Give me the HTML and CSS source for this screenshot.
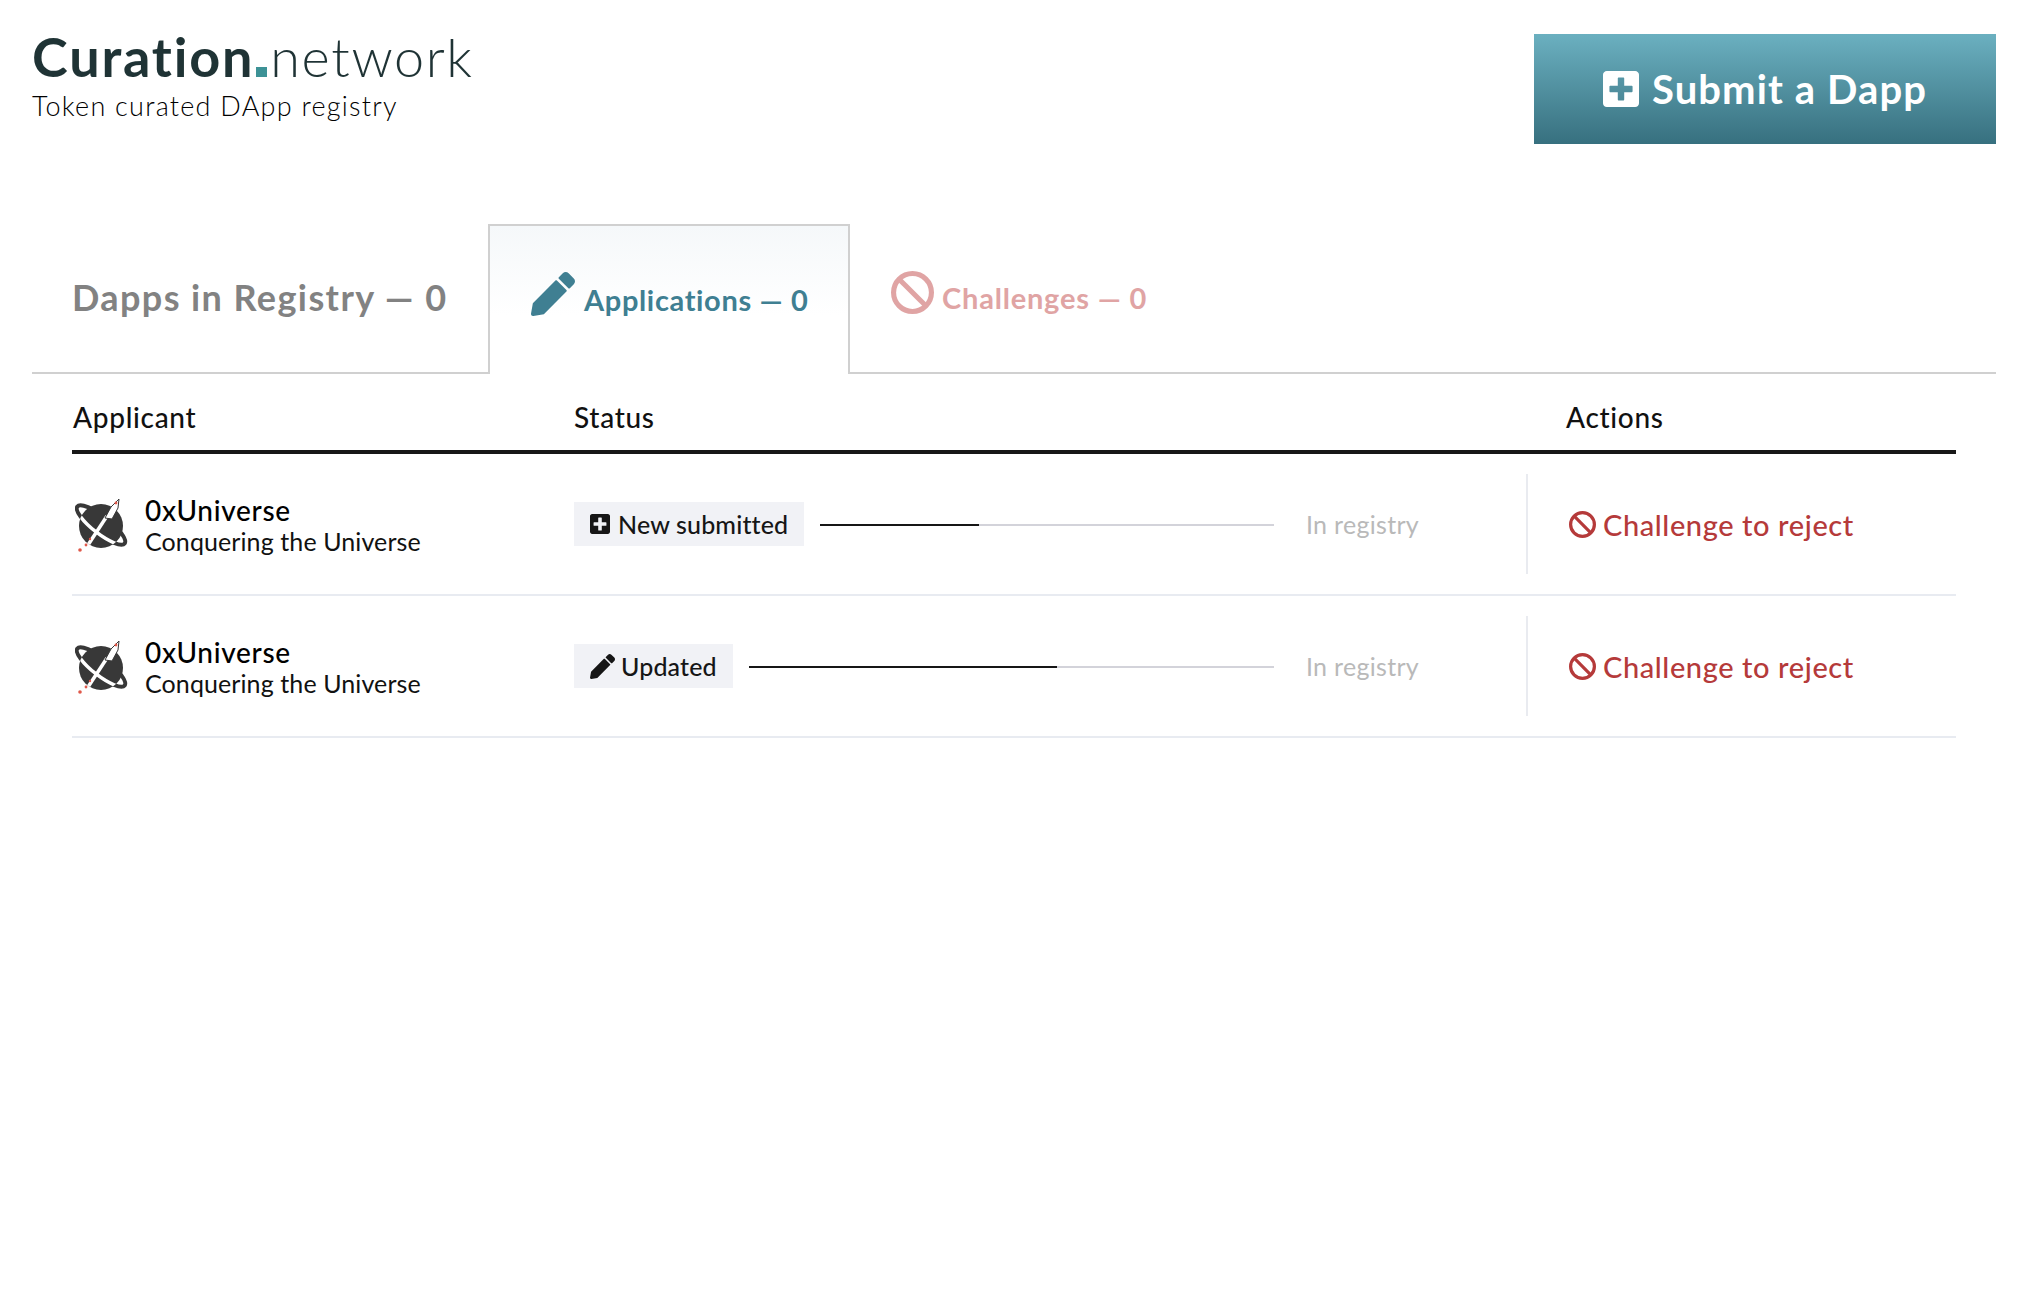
FILE: index.html
```html
<!DOCTYPE html>
<html lang="en">
<head>
<meta charset="utf-8">
<title>Curation.network</title>
<link rel="stylesheet" href="styles.css">
</head>
<body>
<svg class="defs" aria-hidden="true">
  <symbol id="plus" viewBox="0 32 448 448"><path d="M400 32H48C21.5 32 0 53.5 0 80v352c0 26.500 21.500 48 48 48h352c26.500 0 48-21.500 48-48V80c0-26.500-21.500-48-48-48zm-32 252c0 6.600-5.400 12-12 12h-92v92c0 6.600-5.400 12-12 12h-56c-6.600 0-12-5.400-12-12v-92H92c-6.600 0-12-5.400-12-12v-56c0-6.600 5.400-12 12-12h92v-92c0-6.600 5.400-12 12-12h56c6.600 0 12 5.400 12 12v92h92c6.600 0 12 5.400 12 12v56z"/></symbol>
  <symbol id="pencil" viewBox="0 0 512 512"><path d="M497.900 142.100l-46.100 46.100c-4.700 4.700-12.300 4.700-17 0l-111-111c-4.700-4.700-4.700-12.300 0-17l46.100-46.100c18.700-18.700 49.100-18.700 67.900 0l60.100 60.100c18.800 18.700 18.800 49.100 0 67.900zM284.200 99.800L21.600 362.400.4 483.900c-2.900 16.400 11.400 30.600 27.800 27.800l121.500-21.300 262.600-262.600c4.700-4.700 4.700-12.300 0-17l-111-111c-4.800-4.700-12.400-4.700-17.100 0z"/></symbol>
  <symbol id="ban" viewBox="0 0 42 42"><circle cx="21" cy="21" r="18.500" fill="none" stroke="currentColor" stroke-width="5"/><path d="M8.500 8.500l25 25" fill="none" stroke="currentColor" stroke-width="5"/></symbol>
  <symbol id="planet" viewBox="0 0 56 56">
    <clipPath id="planet-clip"><circle cx="26" cy="28" r="22"/></clipPath>
    <ellipse cx="26" cy="27" rx="30" ry="8.500" transform="rotate(38 26 27)" fill="none" stroke="#383838" stroke-width="4"/>
    <circle cx="26" cy="28" r="22" fill="#383838"/>
    <g clip-path="url(#planet-clip)">
      <path d="M-4 27A30 8.500 0 0 0 56 27" transform="rotate(38 26 27)" fill="none" stroke="#fff" stroke-width="3.500"/>
      <path d="M13 47L32 18" fill="none" stroke="#fff" stroke-width="3.500"/>
    </g>
    <path d="M30 20l6-11 8-8-1 9-6 11z" fill="#fff" stroke="#383838" stroke-width="1"/>
    <circle cx="41" cy="5" r="1.400" fill="#e0584a"/>
    <circle cx="5" cy="52" r="1.800" fill="#e0584a"/>
    <circle cx="11" cy="47" r="1.400" fill="#e0584a"/>
    <circle cx="15" cy="41" r="1.200" fill="#e0584a"/>
  </symbol>
</svg>

<div class="app">
  <header class="topbar">
    <div class="brand">
      <h1 class="logo"><span class="logo-bold">Curation</span><span class="logo-dot"></span><span class="logo-light">network</span></h1>
      <p class="tagline">Token curated DApp registry</p>
    </div>
    <button class="submit"><svg class="submit-icon"><use href="#plus"/></svg>Submit a Dapp</button>
  </header>

  <nav class="tabs">
    <a class="tab tab-registry">Dapps in Registry — 0</a>
    <a class="tab tab-active"><svg class="tab-pencil"><use href="#pencil"/></svg><span>Applications — 0</span></a>
    <a class="tab tab-challenges"><svg class="tab-ban"><use href="#ban"/></svg><span>Challenges — 0</span></a>
  </nav>

  <section class="table">
    <div class="table-head">
      <div class="col-applicant">Applicant</div>
      <div class="col-status">Status</div>
      <div class="col-actions">Actions</div>
    </div>

    <div class="row">
      <div class="col-applicant applicant">
        <svg class="avatar"><use href="#planet"/></svg>
        <div><div class="name">0xUniverse</div><div class="desc">Conquering the Universe</div></div>
      </div>
      <div class="col-status status">
        <span class="badge"><svg class="badge-icon"><use href="#plus"/></svg>New submitted</span>
        <div class="track"><div class="fill fill-a"></div></div>
        <span class="target">In registry</span>
      </div>
      <div class="col-actions action"><svg class="action-icon"><use href="#ban"/></svg>Challenge to reject</div>
    </div>

    <div class="row">
      <div class="col-applicant applicant">
        <svg class="avatar"><use href="#planet"/></svg>
        <div><div class="name">0xUniverse</div><div class="desc">Conquering the Universe</div></div>
      </div>
      <div class="col-status status">
        <span class="badge"><svg class="badge-icon badge-icon-pencil"><use href="#pencil"/></svg>Updated</span>
        <div class="track"><div class="fill fill-b"></div></div>
        <span class="target">In registry</span>
      </div>
      <div class="col-actions action"><svg class="action-icon"><use href="#ban"/></svg>Challenge to reject</div>
    </div>
  </section>
</div>
</body>
</html>
```
FILE: styles.css
```css
* { box-sizing: border-box; }
html, body { margin: 0; background: #fff; }
body { font-family: "Lato", "Open Sans", sans-serif; color: #111; }
.defs { position: absolute; width: 0; height: 0; }
.app { padding: 34px 36px 0 32px; }

.topbar { display: flex; justify-content: space-between; align-items: flex-start; height: 190px; }
.logo { margin: -2px 0 0; font-size: 54px; line-height: 50px; font-weight: 400; color: #1f3335; display: flex; align-items: baseline; }
.logo-bold { font-weight: 700; letter-spacing: 1.800px; }
.logo-dot { width: 11px; height: 10px; background: #3d9296; margin: 0 3px 0 2px; }
.logo-light { font-weight: 300; letter-spacing: 1.600px; }
.tagline { margin: 8px 0 0; font-size: 27px; line-height: 32px; font-weight: 300; color: #000; letter-spacing: 1.250px; }

.submit { width: 462px; height: 110px; border: 0; padding: 0 0 0 0; background: linear-gradient(#6bb0c0, #37707f); color: #fff; font: 700 40px "Lato", sans-serif; letter-spacing: 1.100px; display: flex; align-items: center; justify-content: center; gap: 13px; }
.submit-icon { width: 36px; height: 36px; fill: #fff; }

.tabs { display: flex; align-items: stretch; height: 150px; border-bottom: 2px solid #d0d0d0; }
.tab { display: flex; align-items: center; font-weight: 700; }
.tab-registry { width: 456px; padding: 0 0 2px 40px; font-size: 36px; color: #828282; letter-spacing: 1.400px; }
.tab-active { width: 362px; height: 150px; padding: 0 0 2px 40px; border: 2px solid #d0d0d0; border-bottom: 0; background: linear-gradient(#f5f8fa, #fff 60%); font-size: 29px; color: #3f7f92; gap: 8px; letter-spacing: 0.650px; }
.tab-pencil { width: 46px; height: 44px; fill: #3f7f92; margin-top: -10px; flex: none; }
.tab-challenges { padding: 0 0 2px 41px; font-size: 29px; color: #e0a4a4; gap: 8px; letter-spacing: 0.800px; }
.tab-ban { width: 43px; height: 43px; color: #e0a4a4; margin-top: -10px; flex: none; }

.table { margin-left: 40px; width: 1884px; }
.table-head { display: flex; height: 80px; border-bottom: 4px solid #181818; font-size: 28px; font-weight: 500; padding-top: 24px; line-height: 38px; letter-spacing: 0.700px; }
.table-head .col-applicant { padding-left: 1px; }
.col-applicant { width: 502px; flex: none; }
.col-status { width: 952px; flex: none; }
.table-head .col-actions { padding-left: 40px; }

.row { display: flex; height: 142px; align-items: center; border-bottom: 2px solid #e8ebf1; }
.applicant { display: flex; align-items: center; gap: 14px; padding: 4px 0 0 3px; }
.avatar { width: 56px; height: 56px; flex: none; }
.name { font-size: 28px; font-weight: 500; line-height: 30px; color: #000; letter-spacing: 0.700px; }
.desc { font-size: 25px; line-height: 32px; color: #111; letter-spacing: 0.100px; }

.status { display: flex; align-items: center; height: 100px; padding-right: 108px; }
.badge { height: 44px; flex: none; display: flex; align-items: center; gap: 8px; padding: 0 16px; background: #f1f2f6; font-size: 25px; font-weight: 500; color: #161616; letter-spacing: 0.150px; }
.badge-icon { width: 20px; height: 20px; fill: #161616; }
.badge-icon-pencil { width: 25px; height: 25px; margin-right: -2px; }
.track { flex: 1; height: 2px; margin: 2px 32px 0 16px; background: #d3d3da; }
.fill { height: 2px; background: #161616; }
.fill-a { width: 35%; }
.fill-b { width: 58.700%; }
.target { font-size: 25px; color: #b9b9b9; width: 112px; flex: none; white-space: nowrap; letter-spacing: 0.300px; }

.action { display: flex; align-items: center; gap: 7px; height: 100px; padding-left: 41px; border-left: 2px solid #e9ebf0; font-size: 29px; font-weight: 500; color: #b53a3a; white-space: nowrap; letter-spacing: 0.600px; }
.action-icon { width: 27px; height: 27px; color: #b53a3a; flex: none; }
```
